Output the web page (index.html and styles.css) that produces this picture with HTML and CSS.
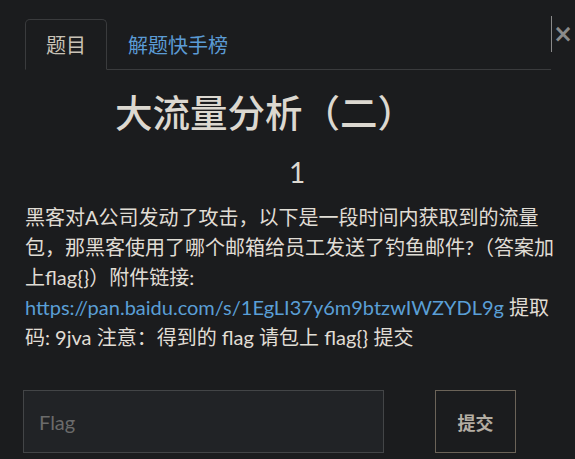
FILE: index.html
```html
<!DOCTYPE html>
<html lang="zh">
<head>
  <meta charset="UTF-8" />
  <meta name="viewport" content="width=device-width, initial-scale=1.0" />
  <title>大流量分析（二）</title>
  <link rel="stylesheet" href="styles.css">
</head>
<body>
  <div class="modal">
    <button class="close" type="button">&times;</button>

    <ul class="tabs">
      <li class="tab active">题目</li>
      <li class="tab">解题快手榜</li>
    </ul>

    <h2 class="challenge-name">大流量分析（二）</h2>
    <h3 class="challenge-value">1</h3>

    <p class="challenge-desc">
      黑客对A公司发动了攻击，以下是一段时间内获取到的流量包，那黑客使用了哪个邮箱给员工发送了钓鱼邮件?（答案加上flag{}）附件链接: <a href="#">https://pan.baidu.com/s/1EgLI37y6m9btzwIWZYDL9g</a> 提取码: 9jva 注意：得到的 flag 请包上 flag{} 提交
    </p>

    <form class="submit-row" onsubmit="return false">
      <input class="flag-input" type="text" placeholder="Flag" />
      <button class="submit-btn" type="submit">提交</button>
    </form>
  </div>
</body>
</html>
```

FILE: styles.css
```css
body {
  margin: 0;
  padding: 0;
  background: #1b1c1e;
  color: #e0ddd5;
  font-family: Lato, "Noto Sans CJK SC", sans-serif;
  overflow: hidden;
}

.modal {
  position: relative;
  padding: 19px 6px 0 25px;
}

.close {
  position: absolute;
  top: 16px;
  left: 551px;
  height: 36px;
  width: 20px;
  padding: 0 0 0 1px;
  border: none;
  border-left: 1px solid #8a8a8a;
  background: none;
  color: #8a8a8a;
  font-family: "DejaVu Sans", sans-serif;
  font-size: 24px;
  font-weight: bold;
  line-height: 34px;
  cursor: pointer;
}

.tabs {
  display: flex;
  list-style: none;
  margin: 0 18px 0 0;
  padding: 0;
  border-bottom: 1px solid #3a3b3d;
}

.tab {
  height: 49px;
  padding: 0 20px;
  margin-bottom: -1px;
  border: 1px solid transparent;
  border-radius: 5px 5px 0 0;
  font-size: 20px;
  line-height: 50px;
  color: #5b9bd5;
}

.tab.active {
  border-color: #3a3b3d #3a3b3d #1b1c1e;
  color: #c9c2b6;
}

.challenge-name {
  margin: 20px 0 0;
  padding-right: 64px;
  text-align: center;
  font-size: 37.5px;
  font-weight: 500;
  line-height: 46px;
  color: #dcd8d0;
}

.challenge-value {
  margin: 18px 0 0;
  text-align: center;
  font-size: 28px;
  font-weight: 400;
  line-height: 36px;
  color: #dcd8d0;
}

.challenge-desc {
  margin: 12px 14px 0 0;
  font-size: 20px;
  line-height: 30px;
}

.challenge-desc a {
  color: #5a9fd6;
  text-decoration: none;
}

.submit-row {
  display: flex;
  gap: 51px;
  margin: 38px 0 0 -2px;
}

.flag-input {
  box-sizing: border-box;
  width: 361px;
  height: 63px;
  padding: 0 15px;
  border: 1px solid #434547;
  background: #212326;
  color: #e0ddd5;
  font-family: Lato, sans-serif;
  font-size: 20px;
  outline: none;
}

.flag-input::placeholder {
  color: #6b6b6b;
}

.submit-btn {
  box-sizing: border-box;
  width: 81px;
  height: 63px;
  border: 1px solid #6b6358;
  background: #1b1c1e;
  color: #b3ada3;
  font-family: "Noto Sans CJK SC", sans-serif;
  font-size: 18px;
  font-weight: bold;
  cursor: pointer;
}
```
